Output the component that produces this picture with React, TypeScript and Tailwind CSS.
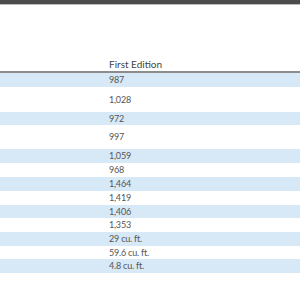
import React from 'react';

const rows = [
  { value: '987', h: 'h-[14px]' },
  { value: '1,028', h: 'h-[25px]' },
  { value: '972', h: 'h-[13px]' },
  { value: '997', h: 'h-[24px]' },
  { value: '1,059', h: 'h-[14px]' },
  { value: '968', h: 'h-[14px]' },
  { value: '1,464', h: 'h-[14px]' },
  { value: '1,419', h: 'h-[14px]' },
  { value: '1,406', h: 'h-[13px]' },
  { value: '1,353', h: 'h-[14px]' },
  { value: '29 cu. ft.', h: 'h-[14px]' },
  { value: '59.6 cu. ft.', h: 'h-[13px]' },
  { value: '4.8 cu. ft.', h: 'h-[14px]' },
];

const App = () => {
  return (
    <div className="w-[300px] h-[300px] bg-white overflow-hidden" style={{ fontFamily: 'Lato, "Open Sans", sans-serif' }}>
      {/* top dark bar */}
      <div className="h-[4px] bg-[#4b4b4b] border-b border-[#bcbcbc] box-content" />
      <div className="h-[52px]" />
      {/* header */}
      <div className="flex h-[14px] items-center border-b-2 border-[#8c8c8c] box-content">
        <div className="w-[109px]" />
        <div className="text-[10px] leading-[14px] text-[#444]">First Edition</div>
      </div>
      <div>
        {rows.map((row, i) => (
          <div
            key={row.value}
            className={`flex items-center ${row.h} ${i % 2 === 0 ? 'bg-[#d7e9f6]' : 'bg-white'}`}
          >
            <div className="w-[109px]" />
            <div className="text-[9px] text-[#555] tracking-[-0.2px]">{row.value}</div>
          </div>
        ))}
      </div>
    </div>
  );
};

export default App;
